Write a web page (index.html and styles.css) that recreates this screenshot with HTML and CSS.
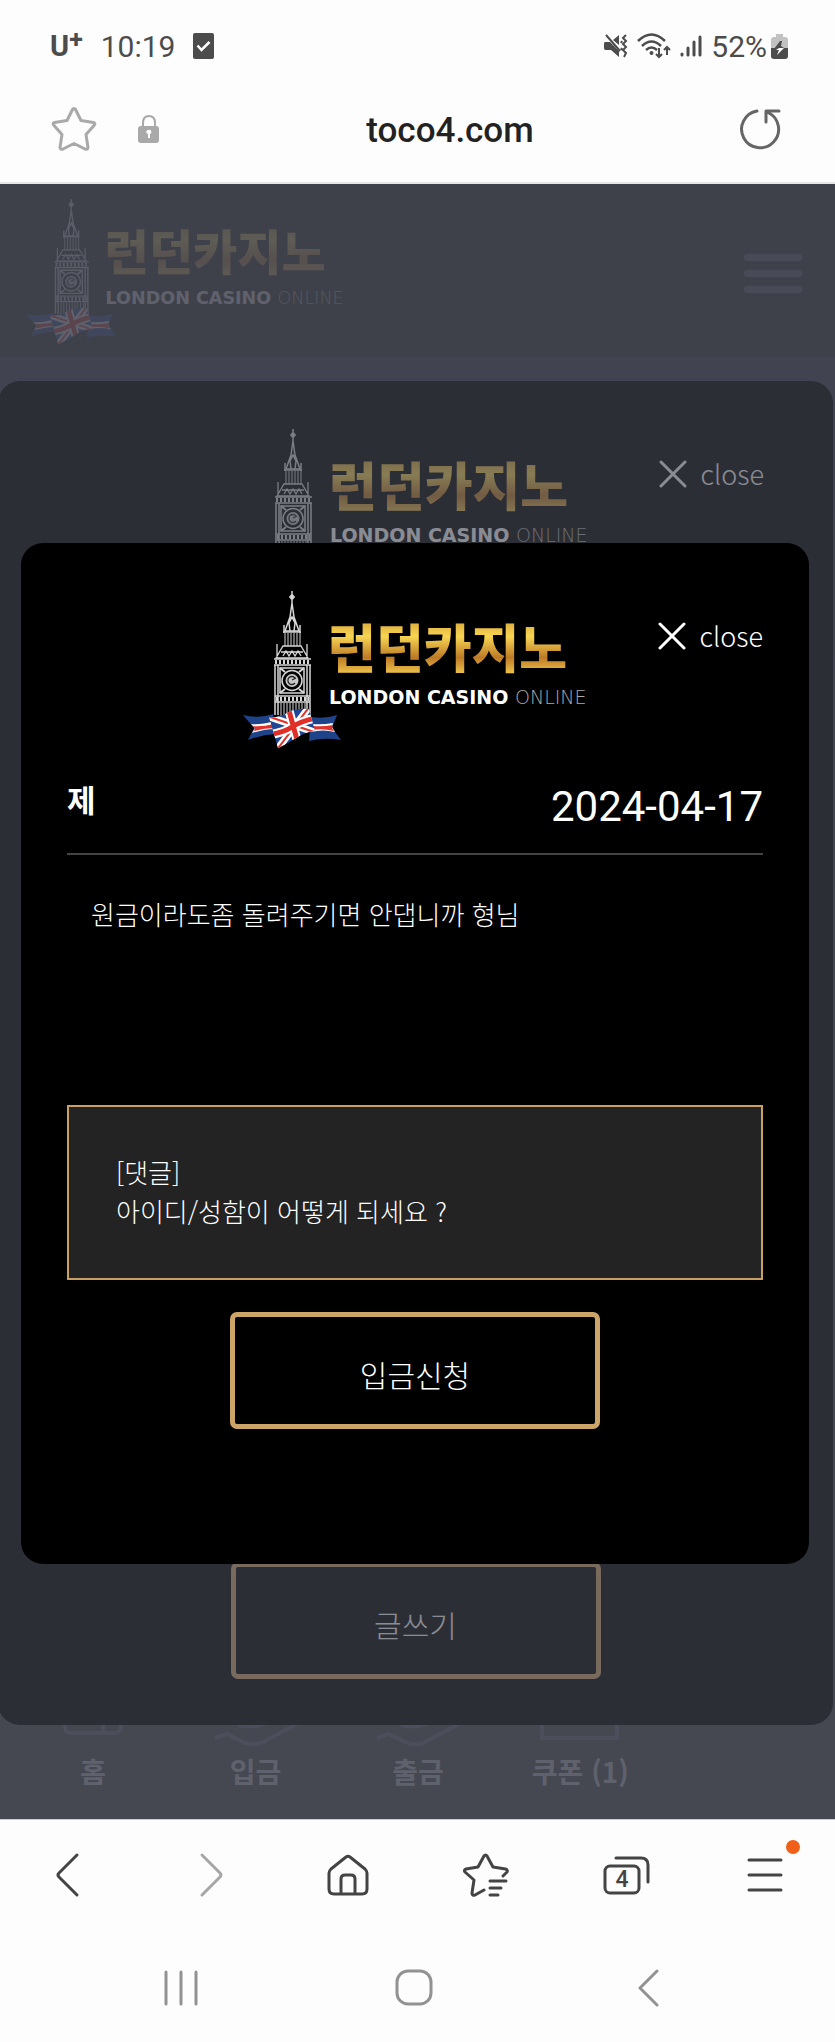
FILE: index.html
```html
<!DOCTYPE html>
<html lang="ko">
<head>
    <meta charset="UTF-8">
    <meta name="viewport" content="width=device-width, initial-scale=1.0">
    <title>런던카지노</title>
    <link rel="stylesheet" href="styles.css">
</head>
<body>
    <!-- Shared logo, used by the header and both popups -->
    <svg class="defs" width="0" height="0" aria-hidden="true">
        <defs>
            <linearGradient id="gold" x1="0" y1="0" x2="0" y2="1">
                <stop offset="0.15" stop-color="#d9a437"/>
                <stop offset="0.38" stop-color="#f7d553"/>
                <stop offset="0.66" stop-color="#bd7a26"/>
                <stop offset="0.9" stop-color="#f3cc50"/>
            </linearGradient>
            <clipPath id="flag-clip">
                <path d="M26 126Q36 127 44 122T66 118L72 140Q62 141 53 147T35 157Z"/>
            </clipPath>
            <symbol id="logo" viewBox="-6 0 356 160">
                <g fill="none" stroke="#d8d8d8" stroke-width="1">
                    <path d="M49 0v12M46 6h6M47.500 4l3 4M50.500 4l-3 4" stroke-width="1.500"/>
                    <path d="M49 12l-2 14-5 14h14l-5-14-2-14M47 27h4M46 32l3-6 3 6-1 8h-4z" stroke-width="1.500"/>
                    <path d="M41 34v8M57 34v8M40 41h18" stroke-width="1.500"/>
                    <path d="M42 42v13M45 42v13M48 42v13M51 42v13M54 42v13M57 42v13"/>
                    <path d="M40 55h18l7 12H33zM34 53v14M64 53v14M38 61h22" stroke-width="1.300"/>
                    <path d="M40 65l3-5 3 5 3-5 3 5 3-5 3 5" stroke-width="1.300"/>
                    <path d="M31 68h37M31 74h37" stroke-width="1.500"/>
                    <path d="M32 71h35" stroke-width="4" stroke-dasharray="2 2"/>
                    <path d="M32 74v50M35 74v50M64 74v50M67 74v50" stroke-width="1.500"/>
                    <path d="M37 77h24v25H37z" stroke-width="1.500"/>
                    <path d="M37 77l5 4M61 77l-5 4M37 102l5-4M61 102l-5-4" stroke-width="2"/>
                    <circle cx="49" cy="89.500" r="10" stroke-width="1.500"/>
                    <circle cx="49" cy="89.500" r="6.500" fill="#c8c8c8" stroke="none"/>
                    <path d="M52 87a4 4 0 1 0 0 5M49 89l4-2" stroke="#222" stroke-width="1.300"/>
                    <path d="M32 105h35M32 111h35" stroke-width="1.500"/>
                    <path d="M33 108h33" stroke-width="4" stroke-dasharray="2 2"/>
                    <path d="M38 112v14M41 112v14M44 112v14M47 112v14M50 112v14M53 112v14M56 112v14M59 112v14M62 112v14"/>
                </g>
                <path d="M0 124q16 4 30-1l3 20q-15 1-28 6l6-12z" fill="#1f4389"/>
                <path d="M8 133q10 1 23-3l1 8q-10 0-23 4l3-5z" fill="#fff"/>
                <path d="M9 135q10 1 22-2l1 4q-10 0-21 3l1-3z" fill="#e0312b"/>
                <path d="M68 126q14 2 26-2l-5 13 9 12q-16-3-32 1z" fill="#1f4389"/>
                <path d="M69 133q10 1 21-1l-1 4 3 5q-12-3-24 0z" fill="#fff"/>
                <path d="M70 135q9 1 20-1l-1 3 2 3q-12-3-22-1z" fill="#e0312b"/>
                <g clip-path="url(#flag-clip)">
                    <path d="M24 114h52v46H24z" fill="#204795"/>
                    <path d="M24 125l50 17M67 115L33 160" stroke="#fff" stroke-width="7"/>
                    <path d="M24 125l50 17M67 115L33 160" stroke="#e0312b" stroke-width="2"/>
                    <path d="M45 116l11 40M24 144q16-2 25-8t24-9" fill="none" stroke="#fff" stroke-width="9"/>
                    <path d="M45 116l11 40M24 144q16-2 25-8t24-9" fill="none" stroke="#df2f28" stroke-width="5"/>
                </g>
                <text class="logo-name" x="85" y="77" fill="url(#gold)">런던카지노</text>
                <text class="logo-sub" x="86" y="113">LONDON CASINO</text>
                <text class="logo-sub logo-sub-thin" x="272" y="113">ONLINE</text>
            </symbol>
        </defs>
    </svg>

    <div class="status-bar">
        <div class="status-left">
            <span class="carrier">U<sup>+</sup></span>
            <span class="time">10:19</span>
            <svg width="21" height="26" viewBox="0 0 21 26">
                <rect width="21" height="26" rx="2" fill="#4c4c4c"/>
                <path d="M4.500 12.500l4 4.500 8-8" fill="none" stroke="#fff" stroke-width="2.500"/>
            </svg>
        </div>
        <div class="status-right">
            <svg width="24" height="24" viewBox="0 0 24 24">
                <path d="M1 8h5l9 9v6l-8-7H1q-1-1-1-2v-4q0-2 1-2zM9 6l6-5v10z" fill="#4c4c4c"/>
                <path d="M2 1l14 16M22 1l-3 3 3 3-3 3 3 3-3 3 3 3-2 4M18 7l-1 2M18 14l-1 2" fill="none" stroke="#4c4c4c" stroke-width="2"/>
            </svg>
            <svg width="34" height="26" viewBox="0 0 34 26" fill="none" stroke="#4c4c4c" stroke-width="2.500">
                <path d="M1 8q13.500-13 27 0M5 13q9.500-9 19 0M9 17q5.500-5 11 0"/>
                <circle cx="14.500" cy="20" r="2" fill="#4c4c4c" stroke="none"/>
                <path d="M22 15v9M19 21l3 3 3-3M30 22v-8M27 17l3-3 3 3" stroke-width="2"/>
            </svg>
            <svg width="22" height="24" viewBox="0 0 22 24" stroke="#4c4c4c" stroke-width="3" stroke-linecap="round">
                <path d="M2 20v1M8 14v7M14 8v13M20 3v18"/>
            </svg>
            <span class="percent">52%</span>
            <svg width="17" height="25" viewBox="0 0 17 25">
                <path d="M5 0h7v3h2q3 0 3 3v9H0V6q0-3 3-3h2z" fill="#c2c2c2"/>
                <path d="M0 14h17v8q0 3-3 3H3q-3 0-3-3z" fill="#4c4c4c"/>
                <path d="M9 7l-6 8h5l2-1h3l-3-2 1-5z" fill="#4c4c4c"/>
                <path d="M8 14h5l-7 7 2-5H5z" fill="#fff"/>
            </svg>
        </div>
    </div>

    <div class="address-bar">
        <button class="icon-button" aria-label="Bookmark">
            <svg width="46" height="46" viewBox="0 0 46 46" fill="none" stroke="#a9a9a9" stroke-width="3" stroke-linejoin="round">
                <path d="M21.500 3.500Q23 1.500 24.500 3.500L30 14.500 42.500 16.500Q45 17.500 43 19.500L35 28.500 37 41.500Q36.500 44 34 43L23 37.500 12 43Q9.500 44 9 41.500L11 28.500 3 19.500Q1 17.500 3.500 16.500L16 14.500Z"/>
            </svg>
        </button>
        <button class="icon-button" aria-label="Site information">
            <svg width="22" height="28" viewBox="0 0 22 28">
                <path d="M5 12V8q0-7 6-7t6 7v4" fill="none" stroke="#a9a9a9" stroke-width="2"/>
                <rect y="11" width="21" height="17" rx="3" fill="#a9a9a9"/>
                <path d="M10.500 15a2 2 0 0 1 1.500 4v4h-2v-4a2 2 0 0 1 .5-4z" fill="#fff"/>
            </svg>
        </button>
        <span class="url">toco4.com</span>
        <button class="icon-button" aria-label="Reload">
            <svg width="42" height="42" viewBox="0 0 42 42" fill="none" stroke="#666" stroke-width="3" stroke-linecap="round" stroke-linejoin="round">
                <path d="M17 3A18.500 18.500 0 1 0 28 4.500M39 3H26V14"/>
            </svg>
        </button>
    </div>

    <main class="page">
        <header class="site-header">
            <a href="/" aria-label="런던카지노"><svg class="site-logo"><use href="#logo"/></svg></a>
            <button class="menu-button" aria-label="메뉴"><span></span><span></span><span></span></button>
        </header>

        <nav class="site-nav">
            <a href="#home">
                <svg width="64" height="64" viewBox="0 0 64 64"><path d="M4 22L32 2l28 20v23q0 6-6 6H10q-6 0-6-6zM42 51V30H24"/></svg>
                홈
            </a>
            <a href="#deposit">
                <svg width="84" height="64" viewBox="0 0 84 64"><circle cx="42" cy="20" r="16"/><path d="M1 56l12-4 16 8q9 4 18 1l36-19M24 43q18 4 30-3"/></svg>
                입금
            </a>
            <a href="#withdraw">
                <svg width="84" height="64" viewBox="0 0 84 64"><circle cx="42" cy="20" r="16"/><path d="M1 56l12-4 16 8q9 4 18 1l36-19M24 43q18 4 30-3"/></svg>
                출금
            </a>
            <a href="#coupon">
                <svg width="88" height="64" viewBox="0 0 88 64"><path d="M2 16h84v25h-5v15H6V41H2z"/></svg>
                쿠폰 (1)
            </a>
        </nav>

        <div class="dim"></div>

        <section class="popup popup-list">
            <div class="popup-head">
                <svg class="popup-logo" role="img" aria-label="런던카지노"><use href="#logo"/></svg>
                <button class="close-button">
                    <svg width="28" height="28" viewBox="0 0 28 28"><path d="M2 2l24 24M26 2L2 26"/></svg>
                    close
                </button>
            </div>
            <button class="gold-button">글쓰기</button>
        </section>

        <div class="dim"></div>

        <section class="popup popup-view">
            <div class="popup-head">
                <svg class="popup-logo" role="img" aria-label="런던카지노"><use href="#logo"/></svg>
                <button class="close-button">
                    <svg width="28" height="28" viewBox="0 0 28 28"><path d="M2 2l24 24M26 2L2 26"/></svg>
                    close
                </button>
            </div>
            <div class="post-head">
                <h1>제</h1>
                <time datetime="2024-04-17">2024-04-17</time>
            </div>
            <p class="post-body">원금이라도좀 돌려주기면 안댑니까 형님</p>
            <div class="reply">
                [댓글]<br>
                아이디/성함이 어떻게 되세요 ?
            </div>
            <button class="gold-button">입금신청</button>
        </section>
    </main>

    <nav class="toolbar">
        <button class="icon-button" aria-label="Back">
            <svg width="48" height="48" viewBox="0 0 48 48"><path d="M31 4L13 22q-2 2 0 4l18 18"/></svg>
        </button>
        <button class="icon-button muted" aria-label="Forward">
            <svg width="48" height="48" viewBox="0 0 48 48"><path d="M17 4l18 18q2 2 0 4L17 44"/></svg>
        </button>
        <button class="icon-button" aria-label="Home">
            <svg width="48" height="48" viewBox="0 0 48 48"><path d="M22 6q2-1.500 4 0l15 12q2 2 2 4v16q0 5-5 5H10q-5 0-5-5V22q0-2 2-4zM17 43V28q0-4 4-4h6q4 0 4 4v15"/></svg>
        </button>
        <button class="icon-button" aria-label="Bookmarks">
            <svg width="48" height="48" viewBox="0 0 48 48"><path d="M40 25l4-4q1-2-1.500-3L30 16 24 5q-1.500-2-3 0L15 16 3 18q-2.500 1-1 3l9 8-2 13q0 3 3 2l9-5M27 30h16M27 37h11M27 44h8"/></svg>
        </button>
        <button class="icon-button" aria-label="Tabs">
            <svg width="48" height="48" viewBox="0 0 48 48">
                <rect x="3" y="15" width="34" height="27" rx="5"/>
                <path d="M14 7h25q7 0 7 7v17"/>
                <text x="20" y="36">4</text>
            </svg>
        </button>
        <button class="icon-button" aria-label="Menu">
            <svg width="48" height="48" viewBox="0 0 48 48"><path d="M8 9h32M8 24h32M8 39h32"/></svg>
            <span class="badge"></span>
        </button>
    </nav>

    <nav class="system-nav">
        <button class="icon-button" aria-label="Recent apps">
            <svg width="40" height="40" viewBox="0 0 40 40"><path d="M5 5v32M20 5v32M35 5v32"/></svg>
        </button>
        <button class="icon-button" aria-label="Home screen">
            <svg width="40" height="40" viewBox="0 0 40 40"><rect x="3" y="4" width="34" height="33" rx="11"/></svg>
        </button>
        <button class="icon-button" aria-label="Back">
            <svg width="40" height="40" viewBox="0 0 40 40"><path d="M30 4L13 21l17 17"/></svg>
        </button>
    </nav>
</body>
</html>
```
FILE: styles.css
```css
* {
    box-sizing: border-box;
}

body {
    display: flex;
    flex-direction: column;
    min-height: 100vh;
    margin: 0;
    background-color: #fdfdfd;
    font-family: "Noto Sans CJK KR", "Noto Sans", sans-serif;
}

button {
    margin: 0;
    padding: 0;
    border: none;
    background: none;
    color: inherit;
    font-family: inherit;
    cursor: pointer;
}

a {
    color: inherit;
    text-decoration: none;
}

svg {
    display: block;
}

.defs {
    position: absolute;
}

/* Phone status bar */
.status-bar {
    display: flex;
    justify-content: space-between;
    align-items: center;
    height: 92px;
    padding: 0 47px 0 50px;
    color: #4c4c4c;
    font-family: Roboto, sans-serif;
    font-size: 30px;
}

.status-left,
.status-right {
    display: flex;
    align-items: center;
}

.status-left {
    gap: 18px;
}

.status-right {
    gap: 9px;
}

.carrier {
    font-size: 29px;
    font-weight: 700;
    line-height: 32px;
}

.carrier sup {
    font-size: 25px;
    line-height: 0;
    vertical-align: 8px;
}

.percent {
    margin-right: -5px;
}

/* Browser address bar */
.address-bar {
    display: flex;
    align-items: center;
    height: 92px;
    padding: 0 53px 16px 51px;
    border-bottom: 2px solid #e6e6e6;
}

.address-bar .icon-button + .icon-button {
    margin-left: 41px;
}

.url {
    flex: 1;
    color: #222;
    font-family: Roboto, sans-serif;
    font-size: 35px;
    font-weight: 500;
    line-height: 42px;
    padding-top: 4px;
    text-align: center;
}

/* Web page */
.page {
    position: relative;
    display: flex;
    flex: 1;
    flex-direction: column;
    justify-content: space-between;
    overflow: hidden;
    background: linear-gradient(#201a30, #424038 60%);
}

.site-header {
    display: flex;
    justify-content: space-between;
    padding: 15px 33px 10px 20px;
    background-color: #161200;
}

.site-logo {
    width: 330px;
    height: 148px;
}

.menu-button {
    display: flex;
    flex-direction: column;
    justify-content: center;
    gap: 9px;
    width: 58px;
}

.menu-button span {
    height: 7px;
    border-radius: 3px;
    background-color: #5c5c60;
}

.site-nav {
    display: grid;
    grid-template-columns: repeat(5, 1fr);
    padding: 0 11px 27px 12px;
    color: #fff;
    font-size: 28px;
    font-weight: 700;
    line-height: 42px;
}

.site-nav a {
    display: flex;
    flex-direction: column;
    align-items: center;
    gap: 4px;
}

.site-nav svg {
    fill: none;
    stroke: #787880;
    stroke-width: 4;
}

.dim {
    position: absolute;
    inset: 0;
    background-color: rgba(70, 73, 86, 0.63);
}

/* Popups */
.popup {
    position: absolute;
    display: flex;
    flex-direction: column;
    padding: 48px 46px 46px;
    border-radius: 22px;
    background-color: #000;
    color: #fff;
    font-size: 26px;
    font-weight: 300;
    line-height: 39px;
}

.popup-list {
    inset: 197px 2px 94px -2px;
    padding: 48px 69px 46px;
}

.popup-view {
    inset: 359px 26px 255px 21px;
}

.popup-head {
    display: grid;
    grid-template-columns: 1fr auto 1fr;
    align-items: start;
}

.popup-logo {
    grid-column: 2;
    width: 356px;
    height: 160px;
}

.logo-name {
    font-family: "Noto Sans CJK KR", sans-serif;
    font-size: 52px;
    font-weight: 900;
}

.logo-sub {
    fill: #fff;
    font-family: "DejaVu Sans", sans-serif;
    font-size: 19px;
    font-weight: 700;
}

.logo-sub-thin {
    fill: #aaa;
    font-weight: 200;
}

.close-button {
    display: flex;
    justify-self: end;
    align-items: center;
    gap: 14px;
    padding-top: 25px;
    font-size: 27px;
    font-weight: 300;
    line-height: 40px;
}

.close-button svg {
    fill: none;
    stroke: #fff;
    stroke-width: 3;
    stroke-linecap: round;
}

.post-head {
    display: flex;
    justify-content: space-between;
    align-items: flex-start;
    margin-top: 30px;
    padding-bottom: 20px;
    border-bottom: 2px solid #444;
}

.post-head h1 {
    margin: 0;
    font-size: 31px;
    font-weight: 700;
    line-height: 36px;
}

.post-head time {
    font-family: Roboto, sans-serif;
    font-size: 42px;
    font-weight: 400;
    line-height: 52px;
}

.post-body {
    min-height: 250px;
    margin: 0;
    padding: 39px 24px;
}

.reply {
    padding: 45px 47px 48px;
    border: 2px solid #c9a063;
    background-color: #232323;
}

.gold-button {
    align-self: center;
    width: 370px;
    max-width: 100%;
    margin-top: 32px;
    padding: 35px 0 28px;
    border: 5px solid #cda468;
    border-radius: 7px;
    font-size: 30px;
    font-weight: 300;
    line-height: 44px;
}

.popup-list .gold-button {
    margin-top: auto;
}

/* Browser toolbar */
.toolbar {
    display: grid;
    grid-template-columns: repeat(6, 1fr);
    padding: 31px 0 32px;
    border-top: 1px solid #ccc;
}

.toolbar .icon-button {
    position: relative;
    justify-self: center;
}

.toolbar svg {
    fill: none;
    stroke: #444;
    stroke-width: 3;
    stroke-linecap: round;
    stroke-linejoin: round;
}

.toolbar .muted svg {
    stroke: #a6a6a6;
}

.toolbar text {
    fill: #444;
    stroke: none;
    font-family: Roboto, sans-serif;
    font-size: 23px;
    font-weight: 500;
    text-anchor: middle;
}

.badge {
    position: absolute;
    top: -11px;
    right: -11px;
    width: 14px;
    height: 14px;
    border-radius: 50%;
    background-color: #f06018;
}

.system-nav {
    display: grid;
    grid-template-columns: repeat(3, 1fr);
    justify-items: center;
    padding: 36px 72px 35px 64px;
}

.system-nav svg {
    fill: none;
    stroke: #929292;
    stroke-width: 3;
    stroke-linecap: round;
    stroke-linejoin: round;
}
```
